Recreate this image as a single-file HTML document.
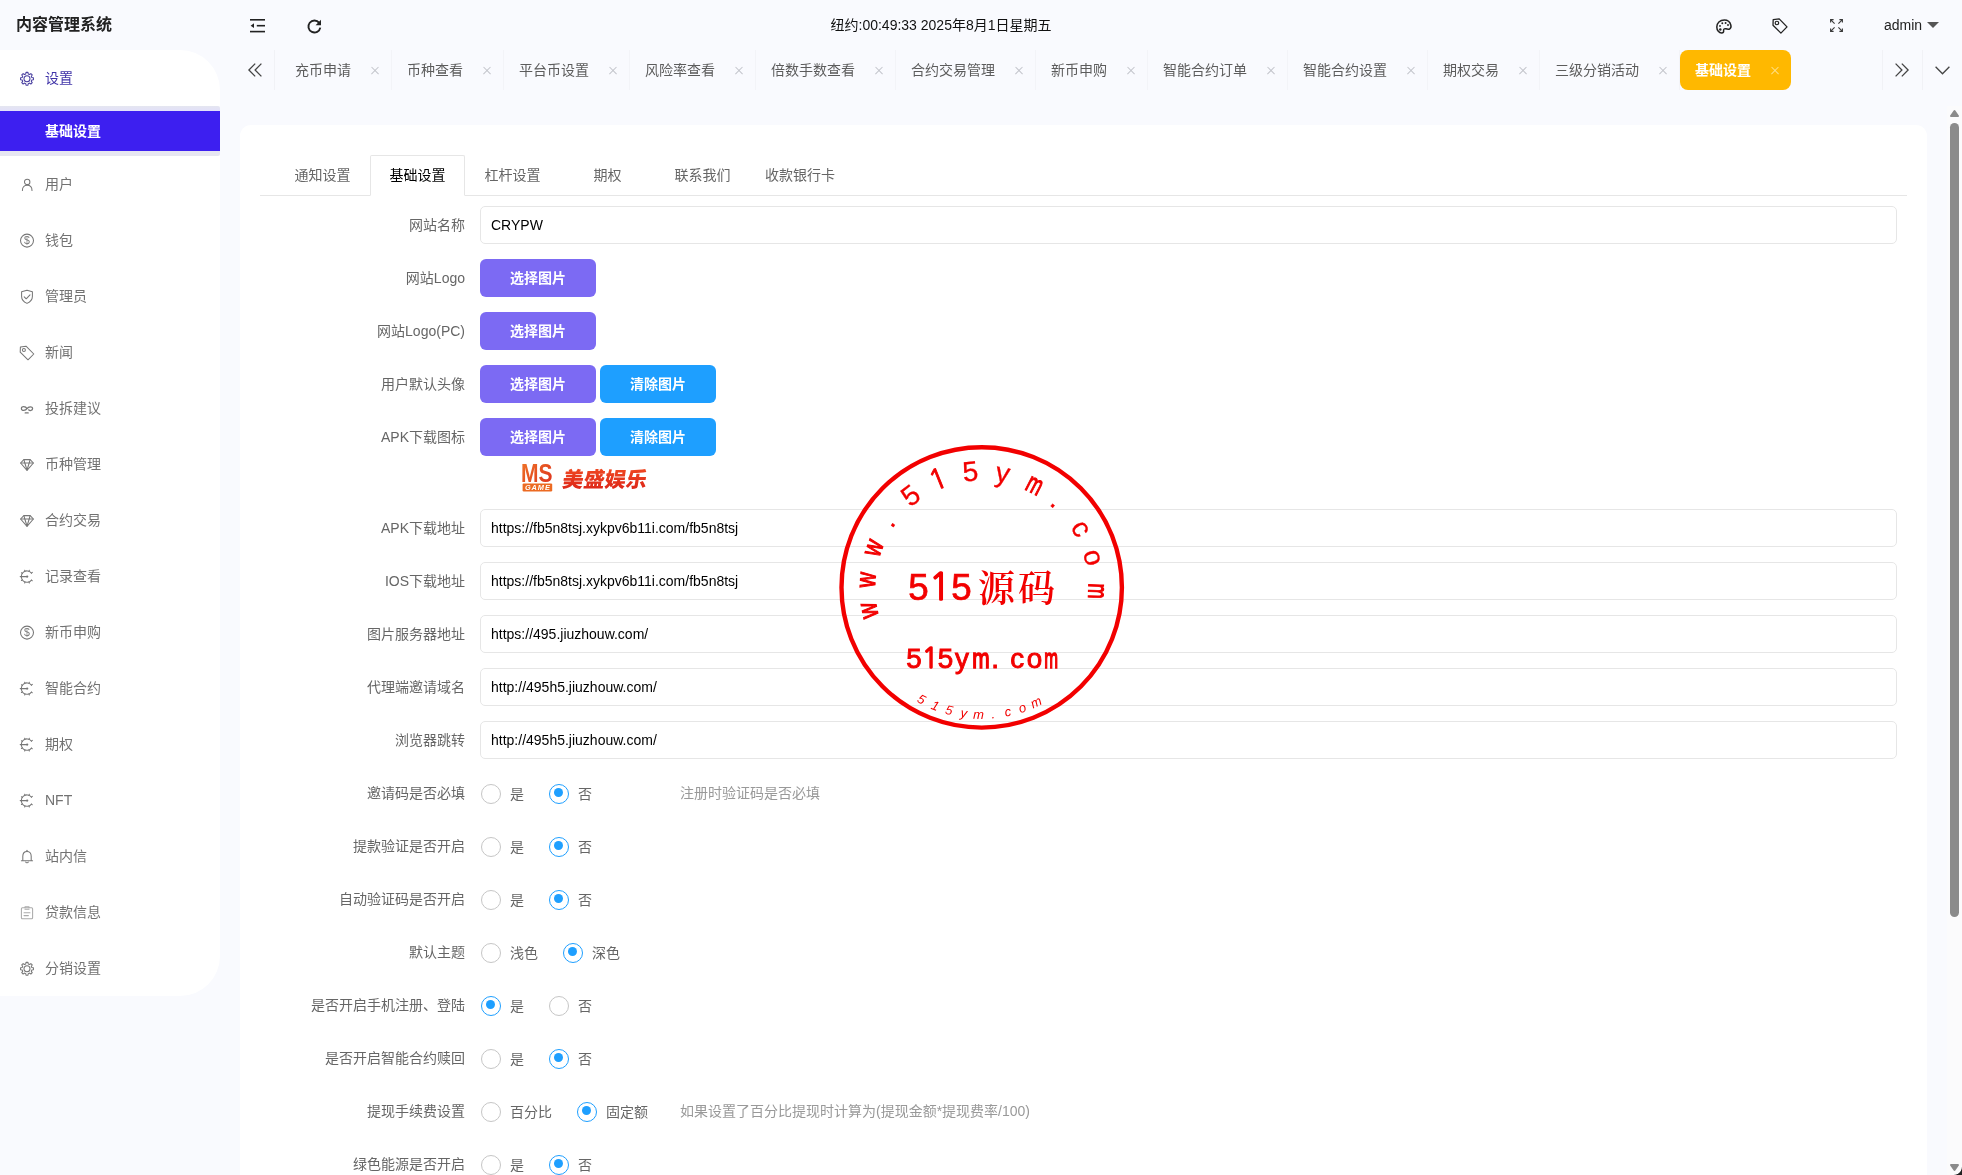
<!DOCTYPE html>
<html lang="zh-CN"><head><meta charset="utf-8"><title>内容管理系统</title>
<style>
*{box-sizing:border-box;margin:0;padding:0}
html,body{width:1962px;height:1175px;overflow:hidden}
body{position:relative;background:#f9fafe;will-change:transform;font-family:"Liberation Sans","Noto Sans CJK SC",sans-serif;font-size:14px;color:#333;-webkit-font-smoothing:antialiased}
.abs{position:absolute}
svg{display:block;overflow:visible}
/* header */
.logo{position:absolute;left:16px;top:0;height:50px;line-height:50px;font-size:16px;font-weight:bold;color:#222;white-space:nowrap}
.hicon{position:absolute}
.clock{position:absolute;left:741px;width:400px;top:0;height:51px;line-height:51px;text-align:center;font-size:14px;color:#111;white-space:nowrap}
.admin{position:absolute;left:1884px;top:0;height:50px;line-height:50px;font-size:14px;color:#222}
.caret{position:absolute;left:1927px;top:22px;width:0;height:0;border:6px solid transparent;border-top-color:#555;border-bottom-width:0}
/* sidebar */
.side{position:absolute;left:0;top:50px;width:220px;height:946px;background:#fff;border-radius:0 40px 40px 0}
.mi{position:absolute;left:0;width:220px;height:56px;line-height:56px;color:#727272;white-space:nowrap}
.mi span{position:absolute;left:45px;top:0}
.mi svg{position:absolute;left:19px;top:20px;width:16px;height:16px}
.mi.on{color:#4034a8}
.sub{position:absolute;left:0;top:56px;width:220px;height:50px;background:linear-gradient(#e5e6f0 0,#e2e0fa 5px,#e2e0fa 50%,#e6e6f1 50%);border-radius:0 2px 2px 0}
.sub div{position:absolute;left:0;top:5px;width:220px;height:40px;line-height:40px;background:#3d1ff0;color:#fff;font-weight:bold;padding-left:45px}
/* page tabs */
.ptabs{position:absolute;left:235px;top:50px;width:1727px;height:40px}
.pt{position:absolute;top:0;height:40px;line-height:40px;border-right:1px solid #f3f4f8;padding-left:15px;color:#5c5c5c;white-space:nowrap}
.pt i{position:absolute;right:11px;top:15.8px;width:10px;height:10px}
.pt i:before,.pt i:after{content:"";position:absolute;left:0;top:4.4px;width:10px;height:1.2px;background:#c2c4ca;transform:rotate(45deg)}
.pt i:after{transform:rotate(-45deg)}
.pt.on{background:#ffb800;color:#fff;font-weight:bold;border-radius:8px;border-right:0}
.pt.on i:before,.pt.on i:after{background:#ffe08a;left:0;width:10px}
.vsep{position:absolute;top:0;width:1px;height:40px;background:#f1f2f6}
/* card */
.card{position:absolute;left:240px;top:125px;width:1687px;height:1100px;background:#fff;border-radius:11px}
.tline{position:absolute;left:20px;top:70px;width:1647px;height:1px;background:#e6e6e6}
.it{position:absolute;top:30px;height:41px;line-height:40px;text-align:center;color:#666;white-space:nowrap}
.it.on{color:#000;border:1px solid #e6e6e6;border-bottom-color:#fff;border-radius:2px 2px 0 0;line-height:38px}
/* form */
.lb{position:absolute;left:0;width:225px;text-align:right;height:38px;line-height:38px;color:#666;white-space:nowrap}
.inp{position:absolute;left:240px;width:1417px;height:38px;line-height:36px;border:1px solid #e6e6e6;border-radius:5px;padding-left:10px;color:#000;background:#fff;white-space:nowrap}
.btn{position:absolute;width:116px;height:38px;line-height:38px;text-align:center;color:#fff;font-weight:bold;border-radius:6px;white-space:nowrap}
.b1{left:240px;background:#7c6af3}
.b2{left:360px;background:#1e9fff}
.rd{position:absolute;width:20px;height:20px;border:1.8px solid #c6c6c6;border-radius:50%;background:#fff}
.rd.on{border-color:#1e9fff}
.rd.on:after{content:"";position:absolute;left:3.7px;top:3.7px;width:9px;height:9px;border-radius:50%;background:#1e9fff}
.rt{position:absolute;height:38px;line-height:38px;color:#666;white-space:nowrap}
.hint{position:absolute;left:440px;height:38px;line-height:38px;color:#999;white-space:nowrap}
/* scrollbar */
.sbtrack{position:absolute;left:1947px;top:106px;width:15px;height:1069px;background:#fbfbfc}
.sbthumb{position:absolute;left:1950px;top:122.7px;width:9px;height:794px;border-radius:5px;background:#8b8b8b}
.corner{position:absolute;right:0;bottom:0;width:8px;height:8px;background:radial-gradient(circle at 0 0,transparent 7.4px,#222 8.2px)}
</style></head>
<body>
<div class="logo">内容管理系统</div>
<svg class="hicon" style="left:250px;top:19px" width="15" height="14" viewBox="0 0 15 14"><g fill="#222"><rect x="0" y="0" width="15" height="1.6"/><rect x="6.8" y="5.9" width="8.2" height="1.6"/><rect x="0" y="11.8" width="15" height="1.6"/><path d="M0.6 6.7 L4 4.3 L4 9.1 Z"/></g></svg>
<svg class="hicon" style="left:307px;top:19px" width="15" height="15" viewBox="0 0 15 15"><path d="M12.2 3.9 A6 6 0 1 0 13.3 8.6" fill="none" stroke="#222" stroke-width="1.9"/><path d="M14 0.8 L14 6.3 L8.6 6.3 Z" fill="#222"/></svg>
<div class="clock">纽约:00:49:33 2025年8月1日星期五</div>
<svg class="hicon" style="left:1716px;top:18.5px" width="16" height="15" viewBox="0 0 16 15"><path d="M8.4 1 C3.8 1 0.8 4.2 0.8 8 C0.8 11.5 3.2 14 5.6 14 C7.4 14 7.8 12.8 7.6 11.6 C7.4 10.2 8.4 9.4 9.8 9.8 C11.2 10.2 12.6 10.6 13.8 9.8 C15 9 15.2 7.4 14.8 6 C14 3 11.6 1 8.4 1 Z" fill="none" stroke="#222" stroke-width="1.5"/><g fill="#222"><circle cx="4.3" cy="10.6" r="1.25"/><circle cx="4" cy="6.9" r="0.95"/><circle cx="6.3" cy="4.3" r="0.95"/><circle cx="9.6" cy="4" r="0.95"/><circle cx="12" cy="6" r="0.95"/></g></svg>
<svg class="hicon" style="left:1772px;top:18px" width="16" height="16" viewBox="0 0 16 16"><path d="M1.2 1.6 L7.2 0.9 L15 8.9 L8.9 15.1 L1 7.2 Z" fill="none" stroke="#222" stroke-width="1.3" stroke-linejoin="round"/><circle cx="4.9" cy="5" r="1.75" fill="none" stroke="#222" stroke-width="1.2"/></svg>
<svg class="hicon" style="left:1830px;top:19px" width="13" height="13" viewBox="0 0 13 13"><g fill="none" stroke="#3a3a3a" stroke-width="1.1"><path d="M0.6 3.6 V0.6 H3.6 M0.8 0.8 L4.6 4.6"/><path d="M9.4 0.6 H12.4 V3.6 M12.2 0.8 L8.4 4.6"/><path d="M0.6 9.4 V12.4 H3.6 M0.8 12.2 L4.6 8.4"/><path d="M9.4 12.4 H12.4 V9.4 M12.2 12.2 L8.4 8.4"/></g></svg>
<div class="admin">admin</div><div class="caret"></div>
<div class="side">
<div class="mi on" style="top:0"><svg viewBox="0 0 16 16"><g fill="none" stroke="#4a40a0" stroke-width="1.05" stroke-linecap="round" stroke-linejoin="round"><path d="M6.76 3.96 L7.03 2.37 L8.97 2.37 L9.24 3.96 L10.55 4.50 L11.86 3.57 L13.23 4.94 L12.30 6.25 L12.84 7.56 L14.43 7.83 L14.43 9.77 L12.84 10.04 L12.30 11.35 L13.23 12.66 L11.86 14.03 L10.55 13.10 L9.24 13.64 L8.97 15.23 L7.03 15.23 L6.76 13.64 L5.45 13.10 L4.14 14.03 L2.77 12.66 L3.70 11.35 L3.16 10.04 L1.57 9.77 L1.57 7.83 L3.16 7.56 L3.70 6.25 L2.77 4.94 L4.14 3.57 L5.45 4.50 Z"/><circle cx="8" cy="8.8" r="3"/></g></svg><span>设置</span></div>
<div class="sub"><div>基础设置</div></div>
<div class="mi" style="top:106px"><svg viewBox="0 0 16 16"><g fill="none" stroke="#777" stroke-width="1.05" stroke-linecap="round" stroke-linejoin="round"><circle cx="8.2" cy="5.9" r="2.7"/><path d="M3.4 14.4 C3.4 11 5.4 9.3 8.2 9.3 C11 9.3 13 11 13 14.4"/></g></svg><span>用户</span></div>
<div class="mi" style="top:162px"><svg viewBox="0 0 16 16"><g fill="none" stroke="#777" stroke-width="1.05" stroke-linecap="round" stroke-linejoin="round"><circle cx="8" cy="8.6" r="6.5"/></g><text x="8" y="12.3" text-anchor="middle" font-size="10.5" font-family="Liberation Sans,sans-serif" fill="#777">$</text><g></g></svg><span>钱包</span></div>
<div class="mi" style="top:218px"><svg viewBox="0 0 16 16"><g fill="none" stroke="#777" stroke-width="1.05" stroke-linecap="round" stroke-linejoin="round"><path d="M8 2.2 L13.4 3.8 V8.4 C13.4 11.6 11.2 13.8 8 15.4 C4.8 13.8 2.6 11.6 2.6 8.4 V3.8 Z"/><path d="M5.2 8.8 L7.2 10.8 L11 6.9"/></g></svg><span>管理员</span></div>
<div class="mi" style="top:274px"><svg viewBox="0 0 16 16"><g fill="none" stroke="#777" stroke-width="1.05" stroke-linecap="round" stroke-linejoin="round"><path d="M1.4 3 L7 2.2 L14.8 10 L9 15.8 L1.2 8.2 Z"/><circle cx="4.9" cy="5.9" r="1.5"/></g></svg><span>新闻</span></div>
<div class="mi" style="top:330px"><svg viewBox="0 0 16 16"><g fill="none" stroke="#777" stroke-width="1.05" stroke-linecap="round" stroke-linejoin="round"><path stroke-width="1.25" d="M8 8.6 C6.6 6.2 2.4 5.9 2.4 8.6 C2.4 11.3 6.6 10.8 8 8.6 C9.4 6.4 13.6 5.9 13.6 8.6 C13.6 10.9 10.8 10.9 9.6 9.8"/><path stroke-width="1.25" d="M6.2 12.9 H9.2"/></g></svg><span>投拆建议</span></div>
<div class="mi" style="top:386px"><svg viewBox="0 0 16 16"><g fill="none" stroke="#777" stroke-width="1.05" stroke-linecap="round" stroke-linejoin="round"><path d="M4.8 3.6 H11.2 L14.4 7 L8 14.4 L1.6 7 Z"/><path d="M1.8 7 H14.2 M5.8 7 L8 14 L10.2 7 M5 3.8 L5.8 7 M11 3.8 L10.2 7"/></g></svg><span>币种管理</span></div>
<div class="mi" style="top:442px"><svg viewBox="0 0 16 16"><g fill="none" stroke="#777" stroke-width="1.05" stroke-linecap="round" stroke-linejoin="round"><path d="M4.8 3.6 H11.2 L14.4 7 L8 14.4 L1.6 7 Z"/><path d="M1.8 7 H14.2 M5.8 7 L8 14 L10.2 7 M5 3.8 L5.8 7 M11 3.8 L10.2 7"/></g></svg><span>合约交易</span></div>
<div class="mi" style="top:498px"><svg viewBox="0 0 16 16"><g fill="none" stroke="#777" stroke-width="1.05" stroke-linecap="round" stroke-linejoin="round"><path d="M12.49 12.11 A5.7 5.7 0 1 1 12.49 5.09"/><path d="M12.49 12.11 L13.36 12.79 M9.95 13.96 L10.33 14.99 M6.05 13.96 L5.67 14.99 M3.33 11.87 L2.43 12.50 M2.30 8.60 L1.20 8.60 M3.33 5.33 L2.43 4.70 M6.05 3.24 L5.67 2.21 M9.95 3.24 L10.33 2.21 M12.49 5.09 L13.36 4.41 "/><circle cx="8.2" cy="8.6" r="1.15" fill="#777" stroke="none"/><path d="M2.6 8.6 H8"/></g></svg><span>记录查看</span></div>
<div class="mi" style="top:554px"><svg viewBox="0 0 16 16"><g fill="none" stroke="#777" stroke-width="1.05" stroke-linecap="round" stroke-linejoin="round"><circle cx="8" cy="8.6" r="6.5"/></g><text x="8" y="12.3" text-anchor="middle" font-size="10.5" font-family="Liberation Sans,sans-serif" fill="#777">$</text><g></g></svg><span>新币申购</span></div>
<div class="mi" style="top:610px"><svg viewBox="0 0 16 16"><g fill="none" stroke="#777" stroke-width="1.05" stroke-linecap="round" stroke-linejoin="round"><path d="M12.49 12.11 A5.7 5.7 0 1 1 12.49 5.09"/><path d="M12.49 12.11 L13.36 12.79 M9.95 13.96 L10.33 14.99 M6.05 13.96 L5.67 14.99 M3.33 11.87 L2.43 12.50 M2.30 8.60 L1.20 8.60 M3.33 5.33 L2.43 4.70 M6.05 3.24 L5.67 2.21 M9.95 3.24 L10.33 2.21 M12.49 5.09 L13.36 4.41 "/><circle cx="8.2" cy="8.6" r="1.15" fill="#777" stroke="none"/><path d="M2.6 8.6 H8"/></g></svg><span>智能合约</span></div>
<div class="mi" style="top:666px"><svg viewBox="0 0 16 16"><g fill="none" stroke="#777" stroke-width="1.05" stroke-linecap="round" stroke-linejoin="round"><path d="M12.49 12.11 A5.7 5.7 0 1 1 12.49 5.09"/><path d="M12.49 12.11 L13.36 12.79 M9.95 13.96 L10.33 14.99 M6.05 13.96 L5.67 14.99 M3.33 11.87 L2.43 12.50 M2.30 8.60 L1.20 8.60 M3.33 5.33 L2.43 4.70 M6.05 3.24 L5.67 2.21 M9.95 3.24 L10.33 2.21 M12.49 5.09 L13.36 4.41 "/><circle cx="8.2" cy="8.6" r="1.15" fill="#777" stroke="none"/><path d="M2.6 8.6 H8"/></g></svg><span>期权</span></div>
<div class="mi" style="top:722px"><svg viewBox="0 0 16 16"><g fill="none" stroke="#777" stroke-width="1.05" stroke-linecap="round" stroke-linejoin="round"><path d="M12.49 12.11 A5.7 5.7 0 1 1 12.49 5.09"/><path d="M12.49 12.11 L13.36 12.79 M9.95 13.96 L10.33 14.99 M6.05 13.96 L5.67 14.99 M3.33 11.87 L2.43 12.50 M2.30 8.60 L1.20 8.60 M3.33 5.33 L2.43 4.70 M6.05 3.24 L5.67 2.21 M9.95 3.24 L10.33 2.21 M12.49 5.09 L13.36 4.41 "/><circle cx="8.2" cy="8.6" r="1.15" fill="#777" stroke="none"/><path d="M2.6 8.6 H8"/></g></svg><span>NFT</span></div>
<div class="mi" style="top:778px"><svg viewBox="0 0 16 16"><g fill="none" stroke="#777" stroke-width="1.05" stroke-linecap="round" stroke-linejoin="round"><path d="M2.4 12.8 H13.6 M3.8 12.6 V8.2 C3.8 5.2 5.7 3.4 8 3.4 C10.3 3.4 12.2 5.2 12.2 8.2 V12.6"/><path d="M6.7 14 C6.9 15.1 9.1 15.1 9.3 14"/><path d="M8 2.2 V3.2"/></g></svg><span>站内信</span></div>
<div class="mi" style="top:834px"><svg viewBox="0 0 16 16"><g fill="none" stroke="#aaa" stroke-width="1.05" stroke-linecap="round" stroke-linejoin="round"><rect x="2.4" y="3.8" width="11.2" height="11" rx="1"/><path d="M6 3.8 V2.8 H10 V3.8 M6 5.2 H10 M5 8.8 H11 M5 11.6 H9.4"/></g></svg><span>贷款信息</span></div>
<div class="mi" style="top:890px"><svg viewBox="0 0 16 16"><g fill="none" stroke="#777" stroke-width="1.05" stroke-linecap="round" stroke-linejoin="round"><path d="M6.76 3.96 L7.03 2.37 L8.97 2.37 L9.24 3.96 L10.55 4.50 L11.86 3.57 L13.23 4.94 L12.30 6.25 L12.84 7.56 L14.43 7.83 L14.43 9.77 L12.84 10.04 L12.30 11.35 L13.23 12.66 L11.86 14.03 L10.55 13.10 L9.24 13.64 L8.97 15.23 L7.03 15.23 L6.76 13.64 L5.45 13.10 L4.14 14.03 L2.77 12.66 L3.70 11.35 L3.16 10.04 L1.57 9.77 L1.57 7.83 L3.16 7.56 L3.70 6.25 L2.77 4.94 L4.14 3.57 L5.45 4.50 Z"/><circle cx="8" cy="8.8" r="3"/></g></svg><span>分销设置</span></div>
</div>
<div class="ptabs">
<svg class="abs" style="left:13px;top:13px" width="14" height="14" viewBox="0 0 14 14"><g fill="none" stroke="#444" stroke-width="1.3"><path d="M7.2 0.6 L0.9 7 L7.2 13.4"/><path d="M13.4 0.6 L7.1 7 L13.4 13.4"/></g></svg>
<div class="vsep" style="left:39px"></div>
<div class="pt" style="left:45px;width:112px">充币申请<i></i></div>
<div class="pt" style="left:157px;width:112px">币种查看<i></i></div>
<div class="pt" style="left:269px;width:126px">平台币设置<i></i></div>
<div class="pt" style="left:395px;width:126px">风险率查看<i></i></div>
<div class="pt" style="left:521px;width:140px">倍数手数查看<i></i></div>
<div class="pt" style="left:661px;width:140px">合约交易管理<i></i></div>
<div class="pt" style="left:801px;width:112px">新币申购<i></i></div>
<div class="pt" style="left:913px;width:140px">智能合约订单<i></i></div>
<div class="pt" style="left:1053px;width:140px">智能合约设置<i></i></div>
<div class="pt" style="left:1193px;width:112px">期权交易<i></i></div>
<div class="pt" style="left:1305px;width:140px">三级分销活动<i></i></div>
<div class="pt on" style="left:1445px;width:111px">基础设置<i></i></div>
<div class="vsep" style="left:1647px"></div><div class="vsep" style="left:1687px"></div>
<svg class="abs" style="left:1660px;top:13px" width="14" height="14" viewBox="0 0 14 14"><g fill="none" stroke="#444" stroke-width="1.3"><path d="M0.6 0.6 L6.9 7 L0.6 13.4"/><path d="M6.8 0.6 L13.1 7 L6.8 13.4"/></g></svg>
<svg class="abs" style="left:1700px;top:16px" width="15" height="9" viewBox="0 0 15 9"><path d="M0.6 0.7 L7.5 7.8 L14.4 0.7" fill="none" stroke="#444" stroke-width="1.3"/></svg>
</div>
<div class="card">
<div class="tline"></div>
<div class="it" style="left:35px;width:95px">通知设置</div>
<div class="it on" style="left:130px;width:95px">基础设置</div>
<div class="it" style="left:225px;width:95px">杠杆设置</div>
<div class="it" style="left:320px;width:95px">期权</div>
<div class="it" style="left:415px;width:95px">联系我们</div>
<div class="it" style="left:510px;width:100px">收款银行卡</div>
<div class="lb" style="top:81px">网站名称</div>
<div class="inp" style="top:81px">CRYPW</div>
<div class="lb" style="top:134px">网站Logo</div>
<div class="btn b1" style="top:134px">选择图片</div>
<div class="lb" style="top:187px">网站Logo(PC)</div>
<div class="btn b1" style="top:187px">选择图片</div>
<div class="lb" style="top:240px">用户默认头像</div>
<div class="btn b1" style="top:240px">选择图片</div>
<div class="btn b2" style="top:240px">清除图片</div>
<div class="lb" style="top:293px">APK下载图标</div>
<div class="btn b1" style="top:293px">选择图片</div>
<div class="btn b2" style="top:293px">清除图片</div>
<div class="abs" style="left:281px;top:338px;width:127px;height:30px"><svg width="127" height="30" viewBox="0 0 127 30"><defs><linearGradient id="mg" x1="0" y1="0" x2="0" y2="1"><stop offset="0" stop-color="#f04a22"/><stop offset="1" stop-color="#dc2418"/></linearGradient><linearGradient id="mg2" x1="0" y1="0" x2="1" y2="1"><stop offset="0" stop-color="#f07a28"/><stop offset="1" stop-color="#dc2a1c"/></linearGradient></defs><text x="0" y="19.2" font-family="Liberation Sans,sans-serif" font-size="26" font-weight="bold" fill="url(#mg2)" textLength="31.5" lengthAdjust="spacingAndGlyphs">MS</text><rect x="1.6" y="20.4" width="29.6" height="8" rx="1.2" fill="#ec6a22"/><text x="16.4" y="27.3" text-anchor="middle" font-family="Liberation Sans,sans-serif" font-size="7.4" font-weight="bold" font-style="italic" fill="#fff" textLength="25">GAME</text><text x="0" y="24" font-family="Liberation Sans,Noto Sans CJK SC,sans-serif" font-size="21" font-weight="900" fill="url(#mg)" textLength="84.5" transform="translate(44.3 0) skewX(-9)">美盛娱乐</text></svg></div>
<div class="lb" style="top:384px">APK下载地址</div>
<div class="inp" style="top:384px">https://fb5n8tsj.xykpv6b11i.com/fb5n8tsj</div>
<div class="lb" style="top:437px">IOS下载地址</div>
<div class="inp" style="top:437px">https://fb5n8tsj.xykpv6b11i.com/fb5n8tsj</div>
<div class="lb" style="top:490px">图片服务器地址</div>
<div class="inp" style="top:490px">https://495.jiuzhouw.com/</div>
<div class="lb" style="top:543px">代理端邀请域名</div>
<div class="inp" style="top:543px">http://495h5.jiuzhouw.com/</div>
<div class="lb" style="top:596px">浏览器跳转</div>
<div class="inp" style="top:596px">http://495h5.jiuzhouw.com/</div>
<div class="lb" style="top:649px">邀请码是否必填</div>
<div class="rd" style="left:241px;top:658.5px"></div>
<div class="rt" style="left:270px;top:650px">是</div>
<div class="rd on" style="left:309px;top:658.5px"></div>
<div class="rt" style="left:338px;top:650px">否</div>
<div class="hint" style="top:649px">注册时验证码是否必填</div>
<div class="lb" style="top:702px">提款验证是否开启</div>
<div class="rd" style="left:241px;top:711.5px"></div>
<div class="rt" style="left:270px;top:703px">是</div>
<div class="rd on" style="left:309px;top:711.5px"></div>
<div class="rt" style="left:338px;top:703px">否</div>
<div class="lb" style="top:755px">自动验证码是否开启</div>
<div class="rd" style="left:241px;top:764.5px"></div>
<div class="rt" style="left:270px;top:756px">是</div>
<div class="rd on" style="left:309px;top:764.5px"></div>
<div class="rt" style="left:338px;top:756px">否</div>
<div class="lb" style="top:808px">默认主题</div>
<div class="rd" style="left:241px;top:817.5px"></div>
<div class="rt" style="left:270px;top:809px">浅色</div>
<div class="rd on" style="left:323px;top:817.5px"></div>
<div class="rt" style="left:352px;top:809px">深色</div>
<div class="lb" style="top:861px">是否开启手机注册、登陆</div>
<div class="rd on" style="left:241px;top:870.5px"></div>
<div class="rt" style="left:270px;top:862px">是</div>
<div class="rd" style="left:309px;top:870.5px"></div>
<div class="rt" style="left:338px;top:862px">否</div>
<div class="lb" style="top:914px">是否开启智能合约赎回</div>
<div class="rd" style="left:241px;top:923.5px"></div>
<div class="rt" style="left:270px;top:915px">是</div>
<div class="rd on" style="left:309px;top:923.5px"></div>
<div class="rt" style="left:338px;top:915px">否</div>
<div class="lb" style="top:967px">提现手续费设置</div>
<div class="rd" style="left:241px;top:976.5px"></div>
<div class="rt" style="left:270px;top:968px">百分比</div>
<div class="rd on" style="left:337px;top:976.5px"></div>
<div class="rt" style="left:366px;top:968px">固定额</div>
<div class="hint" style="top:967px">如果设置了百分比提现时计算为(提现金额*提现费率/100)</div>
<div class="lb" style="top:1020px">绿色能源是否开启</div>
<div class="rd" style="left:241px;top:1029.5px"></div>
<div class="rt" style="left:270px;top:1021px">是</div>
<div class="rd on" style="left:309px;top:1029.5px"></div>
<div class="rt" style="left:338px;top:1021px">否</div>
</div>
<svg class="abs" style="left:0;top:0;pointer-events:none" width="1962" height="1175" viewBox="0 0 1962 1175"><circle cx="981.7" cy="587.4" r="140.2" fill="none" stroke="#f20000" stroke-width="4.4"/><text x="981.7" y="480.6" text-anchor="middle" font-family="Liberation Sans,sans-serif" font-size="28" fill="#f20000" stroke="#f20000" stroke-width="1.2" textLength="15.2" lengthAdjust="spacingAndGlyphs" transform="rotate(-101.5 981.7 587.4)">w</text><text x="981.7" y="480.6" text-anchor="middle" font-family="Liberation Sans,sans-serif" font-size="28" fill="#f20000" stroke="#f20000" stroke-width="1.2" textLength="15.2" lengthAdjust="spacingAndGlyphs" transform="rotate(-86.3 981.7 587.4)">w</text><text x="981.7" y="480.6" text-anchor="middle" font-family="Liberation Sans,sans-serif" font-size="28" fill="#f20000" stroke="#f20000" stroke-width="1.2" textLength="15.2" lengthAdjust="spacingAndGlyphs" transform="rotate(-70 981.7 587.4)">w</text><text x="981.7" y="480.6" text-anchor="middle" font-family="Liberation Sans,sans-serif" font-size="28" fill="#f20000" stroke="#f20000" stroke-width="0.3" transform="rotate(-55 981.7 587.4)">.</text><text x="981.7" y="480.6" text-anchor="middle" font-family="Liberation Sans,sans-serif" font-size="28" fill="#f20000" stroke="#f20000" stroke-width="0.3" transform="rotate(-37.7 981.7 587.4)">5</text><text x="981.7" y="480.6" text-anchor="middle" font-family="NanumGothic,sans-serif" font-size="28" fill="#f20000" stroke="#f20000" stroke-width="0.9" transform="rotate(-22 981.7 587.4)">1</text><text x="981.7" y="480.6" text-anchor="middle" font-family="Liberation Sans,sans-serif" font-size="28" fill="#f20000" stroke="#f20000" stroke-width="0.3" transform="rotate(-5.6 981.7 587.4)">5</text><text x="981.7" y="480.6" text-anchor="middle" font-family="Liberation Sans,sans-serif" font-size="28" fill="#f20000" stroke="#f20000" stroke-width="0.3" transform="rotate(10.5 981.7 587.4)">y</text><text x="981.7" y="480.6" text-anchor="middle" font-family="Liberation Sans,sans-serif" font-size="28" fill="#f20000" stroke="#f20000" stroke-width="1.2" textLength="15.2" lengthAdjust="spacingAndGlyphs" transform="rotate(27.3 981.7 587.4)">m</text><text x="981.7" y="480.6" text-anchor="middle" font-family="Liberation Sans,sans-serif" font-size="28" fill="#f20000" stroke="#f20000" stroke-width="0.3" transform="rotate(41 981.7 587.4)">.</text><text x="981.7" y="480.6" text-anchor="middle" font-family="Liberation Sans,sans-serif" font-size="28" fill="#f20000" stroke="#f20000" stroke-width="0.3" transform="rotate(59.4 981.7 587.4)">c</text><text x="981.7" y="480.6" text-anchor="middle" font-family="Liberation Sans,sans-serif" font-size="28" fill="#f20000" stroke="#f20000" stroke-width="0.3" transform="rotate(75 981.7 587.4)">o</text><text x="981.7" y="480.6" text-anchor="middle" font-family="Liberation Sans,sans-serif" font-size="28" fill="#f20000" stroke="#f20000" stroke-width="1.2" textLength="15.2" lengthAdjust="spacingAndGlyphs" transform="rotate(91.8 981.7 587.4)">m</text><text x="908.2" y="600" font-family="Liberation Sans,sans-serif" font-size="36.8" fill="#f20000" stroke="#f20000" stroke-width="0.7" textLength="63.6" lengthAdjust="spacing">5<tspan font-family="NanumGothic,sans-serif" stroke-width="1.4">1</tspan>5</text><text x="978" y="601.5" font-family="Liberation Serif,Noto Serif CJK SC,serif" font-weight="600" font-size="37" fill="#f20000" textLength="77" lengthAdjust="spacing">源码</text><text x="914.1" y="667.6" text-anchor="middle" font-family="Liberation Sans,sans-serif" font-size="27.8" fill="#f20000" stroke="#f20000" stroke-width="0.9">5</text><text x="930.3" y="667.6" text-anchor="middle" font-family="NanumGothic,sans-serif" font-size="27.8" fill="#f20000" stroke="#f20000" stroke-width="1.5">1</text><text x="945.5" y="667.6" text-anchor="middle" font-family="Liberation Sans,sans-serif" font-size="27.8" fill="#f20000" stroke="#f20000" stroke-width="0.9">5</text><text x="961.9" y="667.6" text-anchor="middle" font-family="Liberation Sans,sans-serif" font-size="27.8" fill="#f20000" stroke="#f20000" stroke-width="0.9">y</text><text x="981.0" y="667.6" text-anchor="middle" font-family="Liberation Sans,sans-serif" font-size="27.8" fill="#f20000" stroke="#f20000" stroke-width="1.5" textLength="17.4" lengthAdjust="spacingAndGlyphs">m</text><text x="995.0" y="667.6" text-anchor="middle" font-family="Liberation Sans,sans-serif" font-size="27.8" fill="#f20000" stroke="#f20000" stroke-width="0.9">.</text><text x="1017.2" y="667.6" text-anchor="middle" font-family="Liberation Sans,sans-serif" font-size="27.8" fill="#f20000" stroke="#f20000" stroke-width="0.9">c</text><text x="1034.6" y="667.6" text-anchor="middle" font-family="Liberation Sans,sans-serif" font-size="27.8" fill="#f20000" stroke="#f20000" stroke-width="0.9">o</text><text x="1051.2" y="667.6" text-anchor="middle" font-family="Liberation Sans,sans-serif" font-size="27.8" fill="#f20000" stroke="#f20000" stroke-width="1.5" textLength="13.8" lengthAdjust="spacingAndGlyphs">m</text><text x="981.7" y="718.9" text-anchor="middle" font-family="Liberation Sans,sans-serif" font-style="italic" font-size="13" fill="#f20000" transform="rotate(28.2 981.7 587.4)">5</text><text x="981.7" y="718.9" text-anchor="middle" font-family="Liberation Sans,sans-serif" font-style="italic" font-size="13" fill="#f20000" transform="rotate(21.5 981.7 587.4)">1</text><text x="981.7" y="718.9" text-anchor="middle" font-family="Liberation Sans,sans-serif" font-style="italic" font-size="13" fill="#f20000" transform="rotate(14.8 981.7 587.4)">5</text><text x="981.7" y="718.9" text-anchor="middle" font-family="Liberation Sans,sans-serif" font-style="italic" font-size="13" fill="#f20000" transform="rotate(8.1 981.7 587.4)">y</text><text x="981.7" y="718.9" text-anchor="middle" font-family="Liberation Sans,sans-serif" font-style="italic" font-size="13" fill="#f20000" transform="rotate(1.4 981.7 587.4)">m</text><text x="981.7" y="718.9" text-anchor="middle" font-family="Liberation Sans,sans-serif" font-style="italic" font-size="13" fill="#f20000" transform="rotate(-5.2 981.7 587.4)">.</text><text x="981.7" y="718.9" text-anchor="middle" font-family="Liberation Sans,sans-serif" font-style="italic" font-size="13" fill="#f20000" transform="rotate(-11.9 981.7 587.4)">c</text><text x="981.7" y="718.9" text-anchor="middle" font-family="Liberation Sans,sans-serif" font-style="italic" font-size="13" fill="#f20000" transform="rotate(-18.6 981.7 587.4)">o</text><text x="981.7" y="718.9" text-anchor="middle" font-family="Liberation Sans,sans-serif" font-style="italic" font-size="13" fill="#f20000" transform="rotate(-25.3 981.7 587.4)">m</text></svg>
<div class="sbtrack"></div><svg class="abs" style="left:1949px;top:109px" width="11" height="9" viewBox="0 0 11 9"><path d="M5.5 2 L9 7 H2 Z" fill="#8b8b8b" stroke="#8b8b8b" stroke-width="2" stroke-linejoin="round"/></svg><div class="sbthumb"></div><svg class="abs" style="left:1949px;top:1163px" width="11" height="9" viewBox="0 0 11 9"><path d="M5.5 7 L9 2 H2 Z" fill="#8b8b8b" stroke="#8b8b8b" stroke-width="2" stroke-linejoin="round"/></svg><div class="corner"></div>
</body></html>
